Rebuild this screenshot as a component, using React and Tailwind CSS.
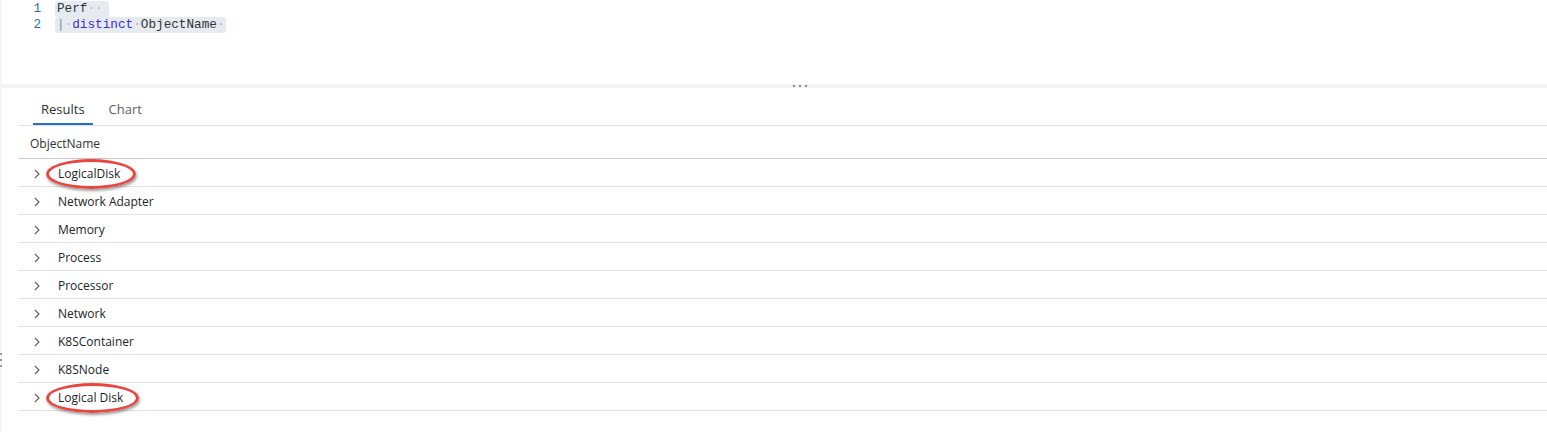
import React from "react";

const rows = [
  { name: "LogicalDisk", circled: true },
  { name: "Network Adapter" },
  { name: "Memory" },
  { name: "Process" },
  { name: "Processor" },
  { name: "Network" },
  { name: "K8SContainer" },
  { name: "K8SNode" },
  { name: "Logical Disk", circled: true },
];

const Dot = () => <span className="text-[#b3b3b3]">·</span>;

const Chevron = () => (
  <svg width="8" height="10" viewBox="0 0 8 10" className="text-[#605e5c]">
    <path d="M2 1 L6 5 L2 9" fill="none" stroke="currentColor" strokeWidth="1.1" />
  </svg>
);

const Editor = () => (
  <div className="h-[84px] font-['Liberation_Mono',monospace] text-[12.7px] leading-[16px]">
    <div className="flex h-[16px] items-center pt-[1px]">
      <span className="w-[39px] text-right text-[#237893]">1</span>
      <span className="ml-[14px] rounded-[3px] bg-[#e6ebf2] pl-[2px] pr-[6px] text-[#333]">
        Perf
        <Dot />
        <Dot />
      </span>
    </div>
    <div className="flex h-[16px] items-center pt-[1px]">
      <span className="w-[39px] text-right text-[#237893]">2</span>
      <span className="ml-[14px] whitespace-pre rounded-[3px] bg-[#e6ebf2] pl-[2px] pr-[1px] text-[#333]">
        <span className="text-[#8a8a8a]">|</span>
        <Dot />
        <span className="text-[#3a2fd0]">distinct</span>
        <Dot />
        ObjectName
        <Dot />
      </span>
    </div>
  </div>
);

const Splitter = () => (
  <div className="flex h-[4px] items-center gap-[4px] bg-[#f3f3f3] pl-[791px]">
    <span className="h-[2px] w-[2px] bg-[#8a8a8a]" />
    <span className="h-[2px] w-[2px] bg-[#8a8a8a]" />
    <span className="h-[2px] w-[2px] bg-[#8a8a8a]" />
  </div>
);

const Row = ({ name, circled }) => (
  <div className="flex h-[28px] items-center border-b border-[#e1e1e1] pt-[3px]">
    <div className="ml-[15px] flex w-[25px] items-center">
      <Chevron />
    </div>
    <span className="relative text-[12px] leading-[16px] text-[#201f1e]">
      {name}
      {circled && (
        <span className="absolute -bottom-[7px] -left-[12px] -right-[16px] -top-[7px] rounded-[50%] border-[3px] border-[#e8463f] shadow-[1px_2px_3px_rgba(0,0,0,0.4)]" />
      )}
    </span>
  </div>
);

const Results = () => (
  <div className="flex-1 pl-[16px] font-['Open_Sans',sans-serif]">
    <div className="flex h-[38px] items-stretch border-b border-[#e1e1e1] pl-[15px] text-[13px]">
      <div className="flex items-center border-b-2 border-[#1f6fd1] px-[8px] pt-[8px] text-[#323130]">
        Results
      </div>
      <div className="ml-[8px] flex items-center px-[8px] pt-[6px] text-[#605e5c]">Chart</div>
    </div>
    <div className="flex h-[33px] items-center border-b border-[#c8c8c8] pl-[12px] pt-[4px] text-[12px] text-[#323130]">
      ObjectName
    </div>
    {rows.map((r) => (
      <Row key={r.name} {...r} />
    ))}
  </div>
);

export default function App() {
  return (
    <div className="flex h-[432px] w-[1547px] overflow-hidden bg-white">
      <div className="flex w-[2px] flex-col items-center bg-[#f5f5f5]">
        <div className="mt-[353px] flex flex-col gap-[4px]">
          <span className="h-[2px] w-[2px] bg-[#999]" />
          <span className="h-[2px] w-[2px] bg-[#999]" />
          <span className="h-[2px] w-[2px] bg-[#999]" />
        </div>
      </div>
      <div className="flex flex-1 flex-col">
        <Editor />
        <Splitter />
        <Results />
      </div>
    </div>
  );
}
